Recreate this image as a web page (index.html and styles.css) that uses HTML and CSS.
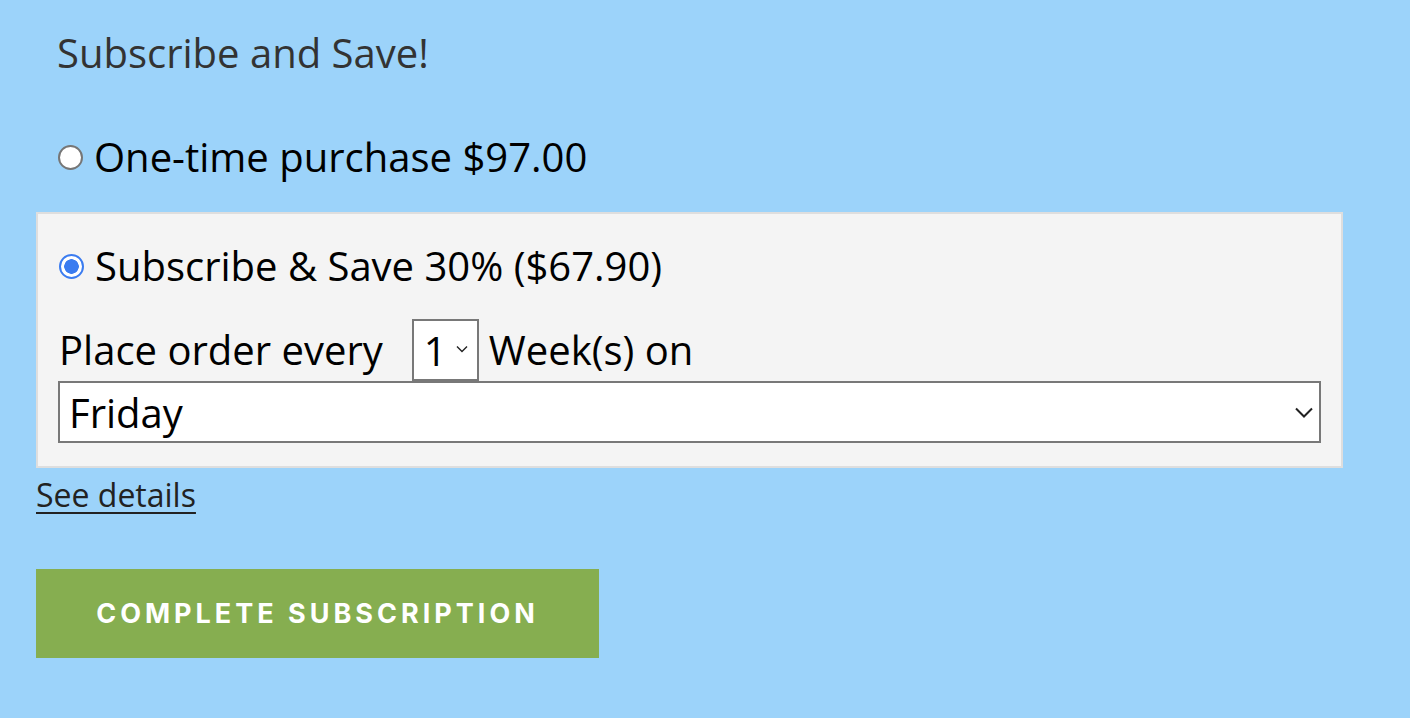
FILE: index.html
```html
<!DOCTYPE html>
<html lang="en">
<head>
<meta charset="utf-8">
<title>Subscribe and Save</title>
<link rel="stylesheet" href="styles.css">
</head>
<body>
<main class="sub">
  <h2 class="sub-title">Subscribe and Save!</h2>
  <label class="opt opt-once">
    <input type="radio" name="plan" class="radio">
    <span>One-time purchase $97.00</span>
  </label>
  <div class="plan-box">
    <label class="opt opt-sub">
      <input type="radio" name="plan" class="radio" checked>
      <span>Subscribe &amp; Save 30% ($67.90)</span>
    </label>
    <div class="freq">
      <span>Place order every</span>
      <span class="sel sel-small">
        <select class="sel-input"><option>1</option><option>2</option><option>3</option><option>4</option></select>
        <svg class="sel-chev sel-chev-s" viewBox="0 0 12 8" width="12" height="8"><path d="M1 1.5 L6 6.5 L11 1.5" fill="none" stroke="#222" stroke-width="1.4"/></svg>
      </span>
      <span>Week(s) on</span>
    </div>
    <span class="sel sel-wide">
      <select class="sel-input"><option>Friday</option><option>Monday</option></select>
      <svg class="sel-chev sel-chev-l" viewBox="0 0 18 11" width="18" height="11"><path d="M1 1.5 L9 9.5 L17 1.5" fill="none" stroke="#222" stroke-width="2"/></svg>
    </span>
  </div>
  <a href="#" class="details">See details</a>
  <button class="cta" type="button">Complete Subscription</button>
</main>
</body>
</html>
```
FILE: styles.css
```css
html, body {
  margin: 0;
  padding: 0;
  background: #9cd3fa;
}
body {
  font-family: "Open Sans", "Noto Sans", sans-serif;
  color: #000;
}
.sub {
  display: flex;
  flex-direction: column;
  align-items: flex-start;
  padding: 26px 36px 0 36px;
  width: 1307px;
}
.sub-title {
  margin: 0 0 0 21px;
  font-size: 40px;
  font-weight: 400;
  line-height: 54px;
  color: #333;
}
.opt {
  display: flex;
  align-items: center;
  gap: 11px;
  font-size: 40px;
  line-height: 54px;
}
.opt-once {
  margin: 50px 0 0 22px;
}
.radio {
  appearance: none;
  -webkit-appearance: none;
  margin: 0;
  width: 25px;
  height: 25px;
  border-radius: 50%;
  border: 2px solid #767676;
  background: #fff;
  box-sizing: border-box;
  flex: none;
}
.radio:checked {
  border-color: #3b7cf0;
  background: radial-gradient(circle, #3b7cf0 0 7px, #fff 7.5px);
}
.plan-box {
  align-self: stretch;
  margin-top: 28px;
  background: #f4f4f4;
  border: 2px solid #dedede;
  padding: 25px 20px 23px 20px;
  display: flex;
  flex-direction: column;
}
.opt-sub {
  margin-left: 1px;
}
.freq {
  display: flex;
  align-items: center;
  margin-top: 26px;
  font-size: 40px;
  line-height: 54px;
  margin-left: 1px;
}
.sel {
  position: relative;
  display: inline-flex;
}
.sel-input {
  appearance: none;
  -webkit-appearance: none;
  font-family: inherit;
  font-size: 40px;
  color: #000;
  background: #fff;
  border: 2px solid #787878;
  border-radius: 0;
  margin: 0;
  box-sizing: border-box;
}
.sel-small {
  margin: 0 10px 0 29px;
}
.sel-small .sel-input {
  width: 67px;
  height: 62px;
  padding: 0 0 0 10px;
}
.sel-wide {
  margin-top: 0;
}
.sel-wide .sel-input {
  width: 1263px;
  height: 62px;
  padding: 0 0 0 9px;
}
.sel-chev {
  position: absolute;
  pointer-events: none;
  top: 50%;
}
.sel-chev-s {
  right: 11px;
  margin-top: -5px;
}
.sel-chev-l {
  right: 8px;
  margin-top: -5px;
}
.details {
  margin-top: 5px;
  font-size: 32px;
  line-height: 44px;
  color: #222;
  text-decoration: underline;
  text-underline-offset: 5px;
  text-decoration-thickness: 2px;
}
.cta {
  margin-top: 52px;
  width: 563px;
  height: 89px;
  border: 0;
  background: #86ae50;
  color: #fff;
  font-family: "Inter", "Lato", sans-serif;
  font-weight: 700;
  font-size: 27px;
  letter-spacing: 4px;
  text-transform: uppercase;
  padding: 0;
  cursor: pointer;
}
```
